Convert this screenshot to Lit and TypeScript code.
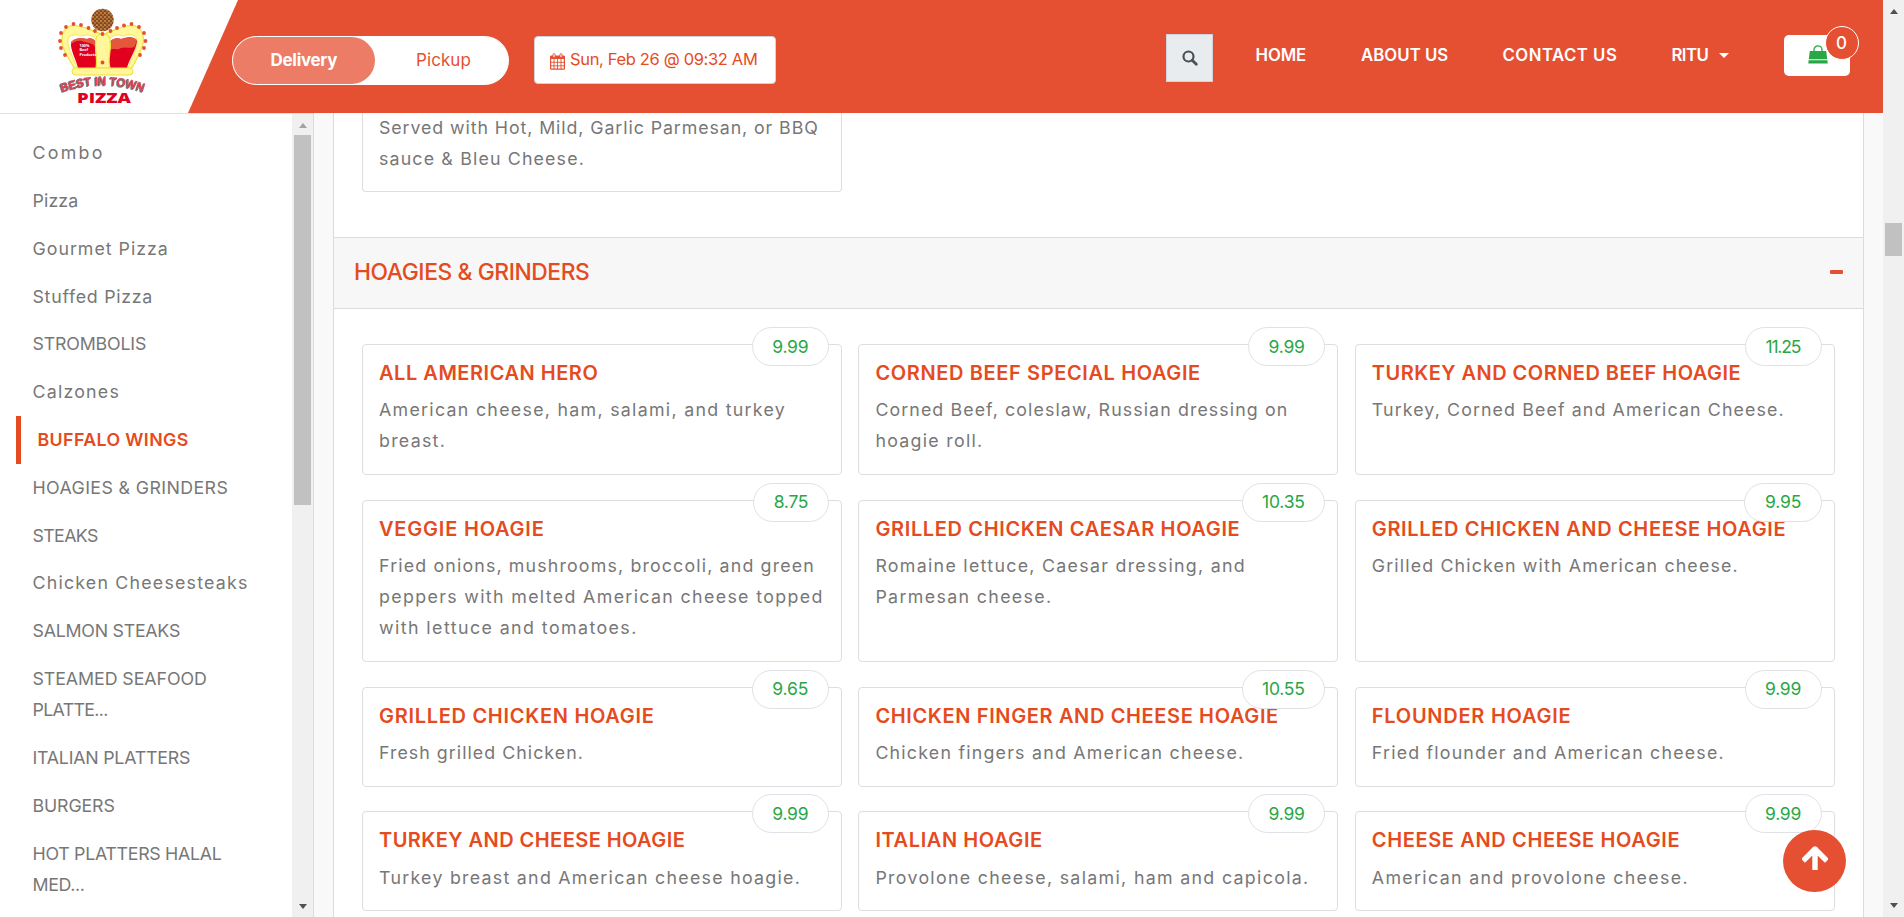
import { LitElement, html, svg, css } from "lit";
import { customElement, property } from "lit/decorators.js";
import { classMap } from "lit/directives/class-map.js";

type Line = [string, number];

/** One line of text, tracked so that it spans the given width. */
@customElement("fit-text")
class FitText extends LitElement {
  @property({ type: Number }) span = 0;
  @property() text = "";
  static styles = css`
    :host { display: inline-block; white-space: pre; }
  `;
  render() {
    return html`${this.text}`;
  }
  updated() {
    this.style.letterSpacing = "0px";
    const natural = this.getBoundingClientRect().width;
    const gaps = Math.max(1, this.text.length - 1);
    const spacing = (this.span + 0.8 - natural) / gaps;
    this.style.letterSpacing = spacing.toFixed(3) + "px";
    this.style.marginRight = (-spacing).toFixed(3) + "px";
  }
}

const fit = ([t, w]: Line) => html`<fit-text .text=${t} .span=${w}></fit-text>`;

const categories: Line[][] = [
  [["Combo", 69]],
  [["Pizza", 45]],
  [["Gourmet Pizza", 134.5]],
  [["Stuffed Pizza", 119]],
  [["STROMBOLIS", 113]],
  [["Calzones", 85.5]],
  [["BUFFALO WINGS", 150]],
  [["HOAGIES & GRINDERS", 194.5]],
  [["STEAKS", 65]],
  [["Chicken Cheesesteaks", 214]],
  [["SALMON STEAKS", 147]],
  [["STEAMED SEAFOOD", 173.5], ["PLATTE...", 75]],
  [["ITALIAN PLATTERS", 157]],
  [["BURGERS", 81.5]],
  [["HOT PLATTERS HALAL", 188.5], ["MED...", 51.5]],
];

interface Item { name: Line; price: Line; lines: Line[]; }

const items: Item[] = [
  { name: ["ALL AMERICAN HERO", 218], price: ["9.99", 35.5], lines: [["American cheese, ham, salami, and turkey", 405], ["breast.", 65]] },
  { name: ["CORNED BEEF SPECIAL HOAGIE", 324], price: ["9.99", 35.5], lines: [["Corned Beef, coleslaw, Russian dressing on", 411], ["hoagie roll.", 106]] },
  { name: ["TURKEY AND CORNED BEEF HOAGIE", 368], price: ["11.25", 35], lines: [["Turkey, Corned Beef and American Cheese.", 411]] },
  { name: ["VEGGIE HOAGIE", 164], price: ["8.75", 34], lines: [["Fried onions, mushrooms, broccoli, and green", 434], ["peppers with melted American cheese topped", 442.5], ["with lettuce and tomatoes.", 256.5]] },
  { name: ["GRILLED CHICKEN CAESAR HOAGIE", 363.5], price: ["10.35", 42], lines: [["Romaine lettuce, Caesar dressing, and", 368.5], ["Parmesan cheese.", 175]] },
  { name: ["GRILLED CHICKEN AND CHEESE HOAGIE", 413], price: ["9.95", 35.5], lines: [["Grilled Chicken with American cheese.", 365]] },
  { name: ["GRILLED CHICKEN HOAGIE", 274], price: ["9.65", 35.5], lines: [["Fresh grilled Chicken.", 203]] },
  { name: ["CHICKEN FINGER AND CHEESE HOAGIE", 402], price: ["10.55", 42], lines: [["Chicken fingers and American cheese.", 367]] },
  { name: ["FLOUNDER HOAGIE", 198], price: ["9.99", 35.5], lines: [["Fried flounder and American cheese.", 351]] },
  { name: ["TURKEY AND CHEESE HOAGIE", 305], price: ["9.99", 35.5], lines: [["Turkey breast and American cheese hoagie.", 420]] },
  { name: ["ITALIAN HOAGIE", 166], price: ["9.99", 35.5], lines: [["Provolone cheese, salami, ham and capicola.", 432]] },
  { name: ["CHEESE AND CHEESE HOAGIE", 307], price: ["9.99", 35.5], lines: [["American and provolone cheese.", 315]] },
];

const beads = [
  [65, 55], [61, 48], [60, 41], [61, 33], [66, 27], [73.5, 24], [81, 25], [88.5, 28], [95, 31],
  [140, 55], [144, 48], [145.5, 41], [144, 33], [139, 27], [131.5, 24], [124, 25.5], [117, 28], [110.5, 31],
  [102.5, 34], [102.5, 62.5],
];

const logo = html`<svg width="180" height="112" viewBox="0 0 180 112">
  <defs>
    <pattern id="crumb" width="4" height="4" patternUnits="userSpaceOnUse">
      <rect width="4" height="4" fill="#8a4a22"></rect>
      <circle cx="1" cy="1" r=".9" fill="#d09a55"></circle>
      <circle cx="3" cy="2.8" r=".9" fill="#c48b48"></circle>
      <circle cx="1.2" cy="3.2" r=".4" fill="#5a2a10"></circle>
    </pattern>
    <path id="arc" d="M62 92 Q102 78 143.500 92"></path>
  </defs>
  <path d="M76 72 C72 62 61 50 62 39 C62 28 70 24 78 26 C88 27 97 34 102.500 34 C108 34 117 27 127 26 C135 24 143 28 143.500 39 C144 50 134 62 130 72 Z" fill="#fff79a" stroke="#f1e23a" stroke-width="1.200"></path>
  <path d="M77 68 C74 58 67 48 68 40 C69 34 76 34 82 36 C90 33 95 37 97 41 L96 68 Z" fill="#fff" stroke="#f1e23a" stroke-width=".8"></path>
  <path d="M128 68 C131 58 138 48 137 40 C136 34 129 34 123 36 C115 33 110 37 108 41 L109 68 Z" fill="#fff" stroke="#f1e23a" stroke-width=".8"></path>
  <path d="M78 68 C76 59 70 50 71 42 C76 37 82 38 87 39 C92 37 95 40 96 43 L97 68 Z" fill="#e2001f"></path>
  <path d="M127 68 C129 59 136 51 137 41 C132 35 126 38 121 39 C115 37 111 40 109 43 L108 68 Z" fill="#e2001f"></path>
  <path d="M71 42 C76 37 82 38 87 39 C92 37 95 40 96 43 L96 47 C92 42 86 43 82 41 C77 40 74 42 71 44 Z M137 40 C132 35 126 38 121 39 C115 37 111 40 109 43 L109 51 C113 47 117 51 121 48 C127 46 131 50 135 46 Z" fill="#e4573a"></path>
  <path d="M96 40 C96 35 99 34 102.500 34 C107 34 110 36 110 41 C112 50 107 58 110 68 L96 68 C98 58 94 50 96 40 Z" fill="#fff79a" stroke="#f1e23a" stroke-width="1.200"></path>
  <rect x="72" y="68" width="61" height="7" rx="3.500" fill="#fff79a" stroke="#ece03a" stroke-width="1"></rect>
  <circle cx="102.500" cy="20" r="11.200" fill="url(#crumb)"></circle>
  ${beads.map(([x, y]) => svg`<circle cx=${x} cy=${y} r="1.900" fill="#e4502c"></circle>`)}
  <text class="beef" x="79.500" y="46.500">100%</text>
  <text class="beef" x="79.500" y="51">Beef</text>
  <text class="beef" x="79.500" y="55.500">Products</text>
  <text class="town"><textPath href="#arc" textLength="83" lengthAdjust="spacingAndGlyphs">BEST IN TOWN</textPath></text>
  <text class="pizza" x="77" y="102.500" textLength="54" lengthAdjust="spacingAndGlyphs">PIZZA</text>
</svg>`;

const calendar = html`<svg class="cal" width="15" height="17" viewBox="0 0 15 17">
  <path d="M1 3h13v3H1z" fill="#e45032"></path>
  <rect x=".6" y="3" width="13.800" height="13.200" rx=".8" fill="none" stroke="#e45032" stroke-width="1.200"></rect>
  <path d="M4 6v10M7.500 6v10M11 6v10M1 9.300h13M1 12.800h13" stroke="#e45032" stroke-width=".9" fill="none"></path>
  <rect x="3" y=".6" width="2" height="4" rx="1" fill="#fff" stroke="#e45032" stroke-width=".9"></rect>
  <rect x="10" y=".6" width="2" height="4" rx="1" fill="#fff" stroke="#e45032" stroke-width=".9"></rect>
</svg>`;

@customElement("app-root")
class AppRoot extends LitElement {
  static styles = css`
    :host {
      display: flex; width: 1904px; height: 917px; overflow: hidden; position: relative;
      font-family: Inter, "Open Sans", sans-serif; font-size: 17.8px; color: #777; background: #fff;
    }
    * { box-sizing: border-box; }
    svg { display: block; }
    .page { width: 1883px; height: 917px; display: flex; flex-direction: column; }
    header { height: 113px; display: flex; flex: none; background: #e55032; color: #fff; }
    .brand { width: 238px; height: 113px; background: #fff; clip-path: polygon(0 0, 100% 0, 188px 100%, 0 100%); }
    .beef { font: 700 3.8px "Open Sans", sans-serif; fill: #fff; }
    .town { font: 700 12px "Liberation Sans", sans-serif; fill: #f0455a; stroke: #8a4048; stroke-width: .3px; filter: drop-shadow(-1px 1px 0 #777); }
    .pizza { font: 800 14.5px "Open Sans", sans-serif; fill: #e2001f; }
    .bar { flex: 1; display: flex; align-items: flex-start; }
    .toggle { margin: 36px 0 0 -6px; width: 277px; height: 49px; border-radius: 25px; background: #fff; border: 1px solid #fff; display: flex; z-index: 1; font-size: 17px; color: #e55032; }
    .toggle > div { display: flex; align-items: center; justify-content: center; height: 47px; padding-bottom: 1px; }
    .on { width: 142px; border-radius: 24px; background: #ec7c66; color: #fff; font-weight: 700; }
    .off { width: 133px; padding-left: 4px; }
    .date { margin: 36px 0 0 25px; width: 242px; height: 48px; border-radius: 4px; background: #fff; border: 1px solid #ced4da; color: #e54b20; display: flex; align-items: center; padding: 0 0 0 15px; gap: 5px; font-size: 16.5px; }
    .cal { margin-top: 3px; }
    .date fit-text { margin-top: -2px; }
    .search { margin: 34px 0 0 390px; width: 47px; height: 48px; background: #e9ecef; border: 1px solid #ced4da; display: flex; align-items: center; justify-content: center; }
    nav { display: flex; margin: 43px 0 0 42.500px; height: 24px; align-items: center; font-size: 16.8px; font-weight: 600; }
    nav .n { display: flex; align-items: center; }
    .n1 { width: 105.5px; } .n2 { width: 141.5px; } .n3 { width: 169px; } .n4 { width: 112.5px; gap: 10px; }
    .caret { border: 5px solid transparent; border-top-color: #fff; border-bottom: 0; }
    .cart { margin-top: 35px; width: 66px; height: 41px; border-radius: 5px; background: #fff; position: relative; padding: 10px 0 0 24px; }
    .badge { position: absolute; left: 41px; top: -9px; width: 34px; height: 34px; border-radius: 50%; border: 1px solid #fff; background: #e55032; display: flex; align-items: center; justify-content: center; padding-right: 1px; font-size: 17px; font-weight: 500; }
    .body { flex: 1; display: flex; min-height: 0; }
    aside { width: 314px; border-top: 1px solid #dee2e6; border-right: 1px solid #dcdcdc; display: flex; overflow: hidden; flex: none; }
    .cats { width: 292px; padding: 15.500px 0 0 16px; margin: 0; list-style: none; }
    .cats li { padding: 7.800px 0 8.600px 16.500px; line-height: 31.4px; }
    .cats li fit-text { display: block; width: max-content; height: 31.4px; }
    .cats li.active { border-left: 5px solid #e54b20; color: #e54b20; font-weight: 600; }
    .track { width: 21px; background: #f0f0f0; display: flex; flex-direction: column; align-items: center; flex: none; }
    .thumb { width: 17px; background: #c1c1c1; }
    .up, .down { border: 4.5px solid transparent; }
    .up { border-top: 0; border-bottom: 5px solid #505050; }
    .down { border-bottom: 0; border-top: 5px solid #505050; margin-top: auto; }
    .up.dim { border-bottom-color: #a3a3a3; }
    .side .up { margin-top: 9px; } .side .thumb { margin-top: 7px; height: 370px; } .side .down { margin-bottom: 8px; }
    .main .up { margin-top: 9px; } .main .thumb { margin-top: 209px; height: 33px; } .main .down { margin-bottom: 9px; }
    main { flex: 1; background: #f9f9f9; padding: 0 19px; overflow: hidden; }
    .panel { background: #fff; border: 1px solid #dcdcdc; border-width: 0 1px; height: 804px; }
    .prev { height: 124px; padding: 0 28px; overflow: hidden; }
    .prev .card { height: 80px; width: 480px; border-top: 0; border-radius: 0 0 4px 4px; padding-top: 0; }
    .prev .desc { margin-top: -1.500px; }
    .sec { height: 72px; background: #f7f7f7; border: 1px solid #dcdcdc; border-width: 1px 0; display: flex; align-items: center; justify-content: space-between; padding: 0 20px; color: #e54b20; font-size: 22.8px; font-weight: 550; }
    .sec fit-text { margin-top: -4px; }
    .minus { width: 13px; height: 4px; border-radius: 1px; background: #e55032; margin-top: -3px; }
    .grid { display: grid; grid-template-columns: repeat(3, 480px); gap: 24.4px 16.4px; padding: 35px 28px 0; }
    .card { border: 1px solid #dcdee0; border-radius: 4px; padding: 12px 16px 0; position: relative; }
    .name { color: #e54b20; font-size: 20px; font-weight: 600; line-height: 32px; height: 37.3px; }
    .desc { line-height: 31.2px; padding-bottom: 17.7px; }
    .desc fit-text { display: block; width: max-content; height: 31.2px; }
    .price { position: absolute; right: 12px; top: -18px; height: 39px; border-radius: 20px; border: 1px solid #dee2e6; background: #fff; color: #28a745; padding: 0 19.500px 1px; display: flex; align-items: center; font-size: 17.5px; }
    .totop { position: absolute; left: 1783px; top: 830px; width: 63px; height: 62px; border-radius: 50%; background: #e55032; display: flex; align-items: center; justify-content: center; padding-bottom: 6px; }
  `;

  private item(i: Item) {
    return html`<div class="card">
      <div class="price">${fit(i.price)}</div>
      <div class="name">${fit(i.name)}</div>
      <div class="desc">${i.lines.map(fit)}</div>
    </div>`;
  }

  render() {
    return html`
      <div class="page">
        <header>
          <div class="brand">${logo}</div>
          <div class="bar">
            <div class="toggle"><div class="on">${fit(["Delivery", 66])}</div><div class="off">${fit(["Pickup", 54])}</div></div>
            <div class="date">${calendar}${fit(["Sun, Feb 26 @ 09:32 AM", 187])}</div>
            <div class="search"><svg width="16" height="16" viewBox="0 0 16 16"><circle cx="6.500" cy="6.500" r="5" fill="none" stroke="#495057" stroke-width="2.200"></circle><path d="M10.200 10.200L14.300 14.300" stroke="#495057" stroke-width="2.800" stroke-linecap="round"></path></svg></div>
            <nav>
              <div class="n n1">${fit(["HOME", 50])}</div>
              <div class="n n2">${fit(["ABOUT US", 86.5])}</div>
              <div class="n n3">${fit(["CONTACT US", 113.5])}</div>
              <div class="n n4">${fit(["RITU", 36.5])}<span class="caret"></span></div>
            </nav>
            <div class="cart">
              <svg width="20" height="20" viewBox="0 0 20 20"><path d="M1.800 6h16.400l1 8.300H.8zM.6 15.300h18.800l.3 3.200H.3z" fill="#28a745"></path><path d="M6 8.500V4.800a4 4 0 0 1 8 0v3.700" fill="none" stroke="#28a745" stroke-width="1.300"></path></svg>
              <div class="badge">0</div>
            </div>
          </div>
        </header>
        <div class="body">
          <aside>
            <ul class="cats">${categories.map((c, i) => html`<li class=${classMap({ active: i === 6 })}>${c.map(fit)}</li>`)}</ul>
            <div class="track side"><i class="up dim"></i><i class="thumb"></i><i class="down"></i></div>
          </aside>
          <main>
            <div class="panel">
              <div class="prev"><div class="card"><div class="desc">${fit(["Served with Hot, Mild, Garlic Parmesan, or BBQ", 438])}${fit(["sauce & Bleu Cheese.", 204])}</div></div></div>
              <div class="sec">${fit(["HOAGIES & GRINDERS", 235])}<span class="minus"></span></div>
              <div class="grid">${items.map((i) => this.item(i))}</div>
            </div>
          </main>
        </div>
      </div>
      <div class="track main"><i class="up"></i><i class="thumb"></i><i class="down"></i></div>
      <div class="totop"><svg width="26" height="24" viewBox="0 0 26 24"><path d="M3 13L13 3L23 13M13 4V22" fill="none" stroke="#fff" stroke-width="5.400" stroke-linecap="square" stroke-linejoin="round"></path></svg></div>
    `;
  }
}
